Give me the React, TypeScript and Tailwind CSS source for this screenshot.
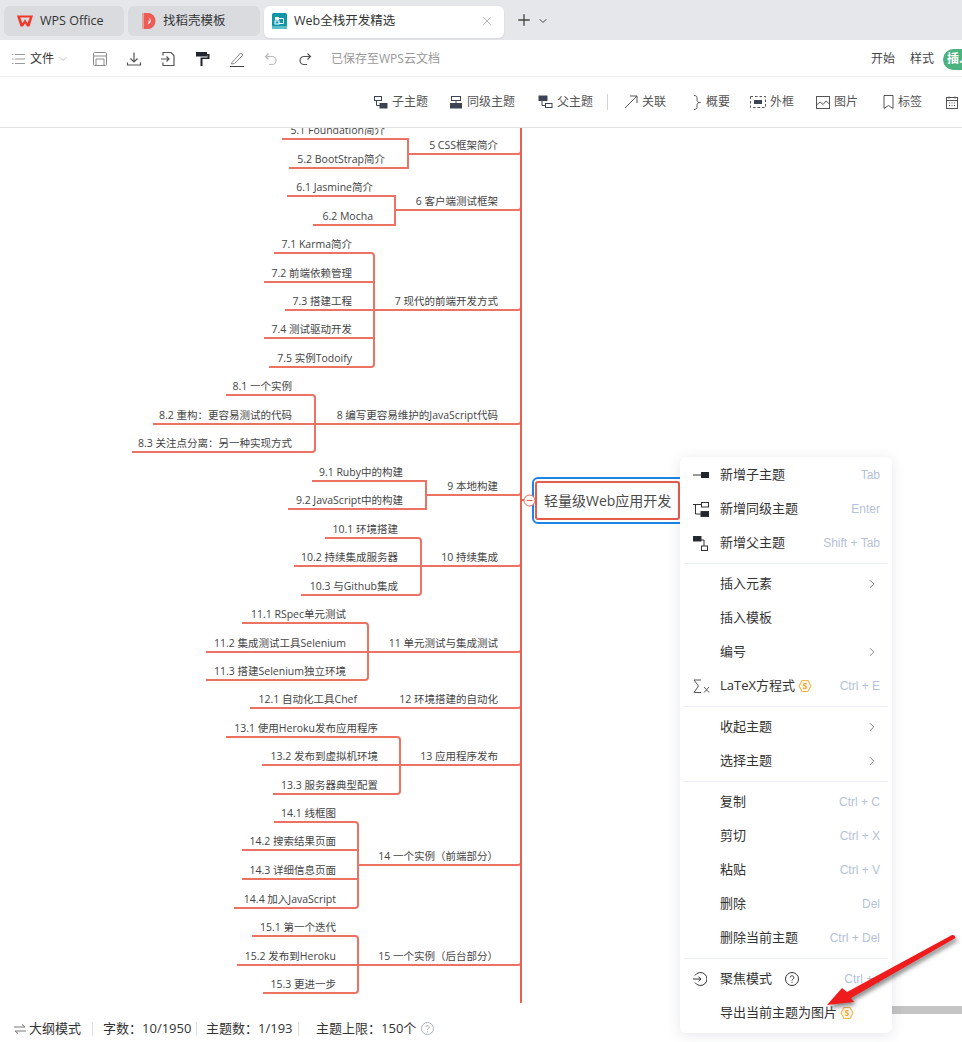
import { ChevronDown, ChevronRight, Plus, X } from "lucide-react";
import type { ReactNode } from "react";

const TOP = 128;
const RED = "#e9604f";

type Branch = {
  label: string;
  y: number;
  bracket: number;
  textRight: number;
  kids: { label: string; y: number; from: number }[];
};

const branches: Branch[] = [
  {
    label: "5 CSS框架简介", y: 154, bracket: 408, textRight: 385,
    kids: [
      { label: "5.1 Foundation简介", y: 139, from: 282 },
      { label: "5.2 BootStrap简介", y: 168, from: 289 },
    ],
  },
  {
    label: "6 客户端测试框架", y: 210, bracket: 395, textRight: 373,
    kids: [
      { label: "6.1 Jasmine简介", y: 196, from: 287 },
      { label: "6.2 Mocha", y: 225, from: 313 },
    ],
  },
  {
    label: "7 现代的前端开发方式", y: 310, bracket: 374, textRight: 352,
    kids: [
      { label: "7.1 Karma简介", y: 253, from: 274 },
      { label: "7.2 前端依赖管理", y: 282, from: 264 },
      { label: "7.3 搭建工程", y: 310, from: 285 },
      { label: "7.4 测试驱动开发", y: 338, from: 264 },
      { label: "7.5 实例Todoify", y: 367, from: 269 },
    ],
  },
  {
    label: "8 编写更容易维护的JavaScript代码", y: 424, bracket: 315, textRight: 292,
    kids: [
      { label: "8.1 一个实例", y: 395, from: 226 },
      { label: "8.2 重构：更容易测试的代码", y: 424, from: 153 },
      { label: "8.3 关注点分离：另一种实现方式", y: 452, from: 132 },
    ],
  },
  {
    label: "9 本地构建", y: 495, bracket: 426, textRight: 403,
    kids: [
      { label: "9.1 Ruby中的构建", y: 481, from: 312 },
      { label: "9.2 JavaScript中的构建", y: 509, from: 288 },
    ],
  },
  {
    label: "10 持续集成", y: 566, bracket: 421, textRight: 398,
    kids: [
      { label: "10.1 环境搭建", y: 538, from: 325 },
      { label: "10.2 持续集成服务器", y: 566, from: 294 },
      { label: "10.3 与Github集成", y: 595, from: 301 },
    ],
  },
  {
    label: "11 单元测试与集成测试", y: 652, bracket: 368, textRight: 346,
    kids: [
      { label: "11.1 RSpec单元测试", y: 623, from: 242 },
      { label: "11.2 集成测试工具Selenium", y: 652, from: 206 },
      { label: "11.3 搭建Selenium独立环境", y: 680, from: 206 },
    ],
  },
  {
    label: "12 环境搭建的自动化", y: 708, bracket: 380, textRight: 357,
    kids: [{ label: "12.1 自动化工具Chef", y: 708, from: 250 }],
  },
  {
    label: "13 应用程序发布", y: 765, bracket: 400, textRight: 378,
    kids: [
      { label: "13.1 使用Heroku发布应用程序", y: 737, from: 226 },
      { label: "13.2 发布到虚拟机环境", y: 765, from: 262 },
      { label: "13.3 服务器典型配置", y: 794, from: 273 },
    ],
  },
  {
    label: "14 一个实例（前端部分）", y: 865, bracket: 358, textRight: 336,
    kids: [
      { label: "14.1 线框图", y: 822, from: 274 },
      { label: "14.2 搜索结果页面", y: 850, from: 242 },
      { label: "14.3 详细信息页面", y: 879, from: 242 },
      { label: "14.4 加入JavaScript", y: 908, from: 234 },
    ],
  },
  {
    label: "15 一个实例（后台部分）", y: 965, bracket: 358, textRight: 336,
    kids: [
      { label: "15.1 第一个迭代", y: 936, from: 252 },
      { label: "15.2 发布到Heroku", y: 965, from: 237 },
      { label: "15.3 更进一步", y: 993, from: 263 },
    ],
  },
];

function branchPath(b: Branch) {
  const r = b.kids.length > 2 ? 3 : 0;
  const first = b.kids[0];
  const last = b.kids[b.kids.length - 1];
  let d = `M${b.bracket} ${b.y - TOP}H518Q521 ${b.y - TOP} 521 ${b.y - TOP - 3}`;
  if (b.kids.length === 1) return d + `M${first.from} ${first.y - TOP}H${b.bracket}`;
  d += `M${first.from} ${first.y - TOP}H${b.bracket - r}Q${b.bracket} ${first.y - TOP} ${b.bracket} ${first.y - TOP + r}`;
  d += `V${last.y - TOP - r}Q${b.bracket} ${last.y - TOP} ${b.bracket - r} ${last.y - TOP}H${last.from}`;
  b.kids.slice(1, -1).forEach((k) => {
    d += `M${k.from} ${k.y - TOP}H${b.bracket}`;
  });
  return d;
}

function MapLabel({ text, right, y }: { text: string; right: number; y: number }) {
  return (
    <div
      className="absolute whitespace-nowrap text-[10.5px] leading-4 text-[#444]"
      style={{ right: 962 - right, top: y - TOP - 17 }}
    >
      {text}
    </div>
  );
}

function Coin() {
  return (
    <svg width="14" height="14" viewBox="0 0 14 14" className="shrink-0">
      <path d="M4 1.500h6L13 7l-3 5.500H4L1 7z" fill="#fff6e5" stroke="#f2b552" strokeWidth="1.100" strokeLinejoin="round" />
      <text x="7" y="10" textAnchor="middle" fontSize="8" fontWeight="700" fill="#eda32c">S</text>
    </svg>
  );
}

function ChildTopicIcon() {
  return (
    <svg width="15" height="14" viewBox="0 0 15 14" fill="none" stroke="#3c4454">
      <rect x="1.500" y="1.500" width="7" height="4" />
      <path d="M3.500 5.500V10.500H7" />
      <rect x="7" y="8.500" width="7" height="4.500" fill="#3c4454" />
    </svg>
  );
}

function SiblingTopicIcon() {
  return (
    <svg width="14" height="14" viewBox="0 0 14 14" fill="none" stroke="#3c4454">
      <rect x="2.500" y="1.500" width="9" height="4" />
      <path d="M7 5.500V8.500" />
      <rect x="1.500" y="8.500" width="11" height="4.500" fill="#3c4454" />
    </svg>
  );
}

function ParentTopicIcon() {
  return (
    <svg width="15" height="14" viewBox="0 0 15 14" fill="none" stroke="#3c4454">
      <rect x="1" y="1" width="8" height="4.500" fill="#3c4454" />
      <path d="M4 5.500V10.500H7.500" />
      <rect x="7.500" y="8.500" width="6.500" height="4" />
    </svg>
  );
}

function ToolItem({ icon, label, className }: { icon: ReactNode; label: string; className?: string }) {
  return (
    <div className={`flex shrink-0 items-center gap-1 ${className ?? ""}`}>
      {icon}
      <span className="text-xs text-[#555]">{label}</span>
    </div>
  );
}

function TabBar() {
  return (
    <div className="flex h-10 shrink-0 items-start gap-1 bg-[#e5e7ea] pl-1 pt-1.5">
      <div className="flex h-[30px] w-[120px] items-center gap-[7px] rounded-md bg-[#d9dbdf] pl-[13px] text-[12.5px] text-[#333]">
        <svg width="16" height="12" viewBox="0 0 16 12">
          <path
            fillRule="evenodd"
            d="M0 .5h16L12.500 11.500H10L8 8.500 6 11.500H3.500zM3.200 2.500L5.500 8.200 8 4.200l2.500 4 2.300-5.700z"
            fill="#f0392a"
          />
        </svg>
        WPS Office
      </div>
      <div className="flex h-[30px] w-[132px] items-center gap-[7px] rounded-md bg-[#d9dbdf] pl-3.5 text-[12.5px] text-[#333]">
        <svg width="14" height="16" viewBox="0 0 14 16">
          <path d="M0 0h6a7.500 8 0 0 1 0 16H0z" fill="#ec5b55" />
          <path d="M0 0h2v16H0z" fill="#e8a09c" />
          <path d="M7.500 4c.5 2 2 3 .8 5.500-.7 1.400-2 1.800-2.800 2 1.700-1.500 1-3 .6-4 .8.300 1.200.800 1.300 1.300.4-1.300.3-3.300.100-4.800z" fill="#fff" />
        </svg>
        找稻壳模板
      </div>
      <div className="flex h-8 w-60 items-center rounded-md bg-white pb-[2px] pl-2 pr-2 text-[12.5px] text-[#333] shadow-[0_1px_2px_rgba(0,0,0,0.08)]">
        <svg width="15" height="16" viewBox="0 0 15 16">
          <rect width="15" height="16" rx="1.500" fill="#0e97a8" />
          <rect y="13" width="15" height="3" fill="#5bbfca" />
          <rect x="3" y="4" width="4" height="3" fill="#fff" />
          <rect x="3" y="8" width="4" height="3" fill="none" stroke="#fff" />
          <path d="M7 5.500h4.500v5H7" fill="none" stroke="#fff" />
        </svg>
        <span className="ml-[7px]">Web全栈开发精选</span>
        <X className="ml-auto mr-0.5 h-3.5 w-3.5 text-[#9a9a9a]" strokeWidth={1.25} />
      </div>
      <Plus className="ml-[7px] mt-[5px] h-[18px] w-[18px] text-[#444]" strokeWidth={1.75} />
      <ChevronDown className="mt-[9px] h-3 w-3 text-[#444]" strokeWidth={2} />
    </div>
  );
}

function MenuBar() {
  const stroke = "#555";
  return (
    <div className="flex h-[37px] shrink-0 items-center border-b border-[#eeeff1] bg-white pl-3 pt-[2px]">
      <svg width="13" height="12" viewBox="0 0 13 12" stroke="#999">
        <path d="M0 1.500h1.500M3 1.500h10M0 6h1.500M3 6h10M0 10.500h1.500M3 10.500h10" />
      </svg>
      <span className="ml-[5px] text-[12px] text-[#333]">文件</span>
      <ChevronDown className="ml-[3px] h-3 w-3 text-[#999]" strokeWidth={1.25} />
      <svg width="16" height="16" viewBox="0 0 16 16" fill="none" stroke="#8a8a8a" className="ml-[23px]">
        <path d="M1.500 2.500a1 1 0 0 1 1-1h11a1 1 0 0 1 1 1v11a1 1 0 0 1-1 1h-11a1 1 0 0 1-1-1zM1.500 5h13M4 14.500V8h8v6.500" />
      </svg>
      <svg width="16" height="16" viewBox="0 0 16 16" fill="none" stroke={stroke} strokeWidth="1.200" className="ml-[18px]">
        <path d="M8 1.500v9M4.500 7.500L8 11l3.500-3.500M1.500 11.500v2.500h13v-2.500" />
      </svg>
      <svg width="16" height="16" viewBox="0 0 16 16" fill="none" stroke={stroke} strokeWidth="1.200" className="ml-[18px]">
        <path d="M3 4.500v-3h8l3 3v10H3v-3M1 8h8M6.500 5.500L9 8l-2.500 2.500" />
      </svg>
      <svg width="14" height="16" viewBox="0 0 14 16" className="ml-[20px]">
        <path d="M0 1h11v4.500H0z" fill="#20252e" />
        <path d="M11 3h2.500v5H6.500v7H4.500V6.500h7z" fill="#20252e" />
      </svg>
      <svg width="16" height="16" viewBox="0 0 16 16" fill="none" stroke="#8a8a8a" className="ml-[19px]">
        <path d="M3 11.500L11.500 2l2.500 2L5.500 12.500l-3 .5z" />
        <path d="M1 15.500h14" stroke="#444" />
      </svg>
      <svg width="14" height="14" viewBox="0 0 14 14" fill="none" stroke="#bbb" strokeWidth="1.200" className="ml-[19px]">
        <path d="M4.500 1.500L1.500 4.500l3 3M1.500 4.500h6.500a4 4 0 0 1 0 8H5" />
      </svg>
      <svg width="14" height="14" viewBox="0 0 14 14" fill="none" stroke={stroke} strokeWidth="1.200" className="ml-[20px]">
        <path d="M9.500 1.500l3 3-3 3M12.500 4.500H6a4 4 0 0 0 0 8h3" />
      </svg>
      <span className="ml-[19px] text-[12px] text-[#999]">已保存至WPS云文档</span>
      <span className="ml-auto text-[12px] text-[#444]">开始</span>
      <span className="ml-[15px] text-[12px] text-[#444]">样式</span>
      <div className="ml-[9px] flex h-[21px] w-[19px] shrink-0 items-center overflow-hidden whitespace-nowrap rounded-l-full bg-[#4cb27f] pl-[4px] text-[12px] font-bold text-white">
        插入
      </div>
    </div>
  );
}

function TopicBar() {
  return (
    <div className="flex h-[51px] shrink-0 items-center overflow-hidden border-b border-[#e4e4e4] bg-white pl-[373px] shadow-[0_1px_2px_rgba(0,0,0,0.04)]">
      <ToolItem icon={<ChildTopicIcon />} label="子主题" />
      <ToolItem className="ml-[21px]" icon={<SiblingTopicIcon />} label="同级主题" />
      <ToolItem className="ml-[23px]" icon={<ParentTopicIcon />} label="父主题" />
      <div className="ml-[14px] h-4 w-px shrink-0 bg-[#d4d4d4]" />
      <ToolItem
        className="ml-[16px]"
        icon={
          <svg width="14" height="14" viewBox="0 0 14 14" fill="none" stroke="#555">
            <path d="M1 13L13 1M6 1h7v7" />
          </svg>
        }
        label="关联"
      />
      <ToolItem
        className="ml-[27px]"
        icon={
          <svg width="9" height="15" viewBox="0 0 9 15" fill="none" stroke="#555">
            <path d="M1 .5c3 0 3 1.500 3 3.500s0 3.500 3.500 3.500C4 7.500 4 9 4 11s0 3.500-3 3.500" />
          </svg>
        }
        label="概要"
      />
      <ToolItem
        className="ml-[20px]"
        icon={
          <svg width="16" height="12" viewBox="0 0 16 12">
            <rect x=".5" y=".5" width="15" height="11" fill="none" stroke="#555" strokeDasharray="2.500 2" />
            <rect x="4" y="4" width="8" height="4" fill="#3c4454" />
          </svg>
        }
        label="外框"
      />
      <ToolItem
        className="ml-[22px]"
        icon={
          <svg width="14" height="13" viewBox="0 0 14 13" fill="none" stroke="#555">
            <rect x=".5" y=".5" width="13" height="12" />
            <path d="M.5 9l3.500-3 3 2.500 3-3.500 3.500 3" />
          </svg>
        }
        label="图片"
      />
      <ToolItem
        className="ml-[25px]"
        icon={
          <svg width="11" height="14" viewBox="0 0 11 14" fill="none" stroke="#555">
            <path d="M1 .5h9v13l-4.500-3-4.500 3z" />
          </svg>
        }
        label="标签"
      />
      <svg width="12" height="13" viewBox="0 0 12 13" fill="none" stroke="#555" className="ml-[24px] shrink-0">
        <rect x=".5" y="1.500" width="11" height="11" />
        <path d="M.5 4.500h11M3 .5v2M9 .5v2M3 7h1M5.500 7h1M8 7h1M3 9.500h1M5.500 9.500h1M8 9.500h1" />
      </svg>
    </div>
  );
}

function MindMap() {
  return (
    <div className="relative min-h-0 flex-1 overflow-hidden bg-white">
      <svg className="absolute left-0 top-0" width="962" height="890" fill="none">
        <path d="M521 0V875" stroke={RED} strokeWidth="2" />
        {branches.map((b) => (
          <path key={b.label} d={branchPath(b)} stroke={RED} strokeWidth="2" opacity="0.88" />
        ))}
      </svg>
      {branches.map((b) => (
        <div key={b.label}>
          <MapLabel text={b.label} right={498} y={b.y} />
          {b.kids.map((k) => (
            <MapLabel key={k.label} text={k.label} right={b.textRight} y={k.y} />
          ))}
        </div>
      ))}
      <div className="absolute left-[532px] top-[349px] flex h-[47px] w-[160px] items-center rounded-md border-2 border-[#1c83e8] bg-white pl-[1px]">
        <div className="flex h-[39px] w-[145px] items-center rounded-[3px] border-[2.5px] border-[#e45c4c] pl-[7px] text-sm text-[#4a4a4a]">
          轻量级Web应用开发
        </div>
      </div>
      <svg className="absolute left-[521px] top-[364px]" width="16" height="16" fill="none">
        <path d="M0 8H3" stroke={RED} strokeWidth="2" />
        <circle cx="8.500" cy="8.500" r="5.500" fill="#fff" stroke={RED} />
        <path d="M5.500 8.500H11.500" stroke={RED} />
      </svg>
      <div className="absolute bottom-[1px] right-0 h-2 w-[70px] bg-[#c4c4c4]" />
    </div>
  );
}

function StatusBar() {
  return (
    <div className="flex h-[27px] shrink-0 items-center bg-white pl-[14px] text-[13px] text-[#333]">
      <svg width="12" height="10" viewBox="0 0 12 10" fill="none" stroke="#777">
        <path d="M0 3h11L8 .5M12 7H1l3 2.500" />
      </svg>
      <span className="ml-[3px]">大纲模式</span>
      <div className="ml-[11px] h-3.5 w-px bg-[#ddd]" />
      <span className="ml-[10px] w-[93px]">字数：10/1950</span>
      <div className="h-3.5 w-px bg-[#ddd]" />
      <span className="ml-[9px] w-[92px]">主题数：1/193</span>
      <div className="h-3.5 w-px bg-[#ddd]" />
      <span className="ml-[17px]">主题上限：150个</span>
      <svg width="13" height="13" viewBox="0 0 13 13" className="ml-[5px]" fill="none" stroke="#aab2bf">
        <circle cx="6.500" cy="6.500" r="6" />
        <path d="M4.800 5.200a1.700 1.700 0 1 1 2.500 1.500c-.6.300-.8.600-.8 1.300M6.500 9.300v1" />
      </svg>
    </div>
  );
}

type MenuRow = {
  label: string;
  hint?: string;
  arrow?: boolean;
  coin?: boolean;
  icon?: ReactNode;
  help?: boolean;
};

const menuGroups: MenuRow[][] = [
  [
    {
      label: "新增子主题",
      hint: "Tab",
      icon: (
        <svg width="16" height="8" viewBox="0 0 16 8">
          <path d="M0 4h9" stroke="#333" />
          <rect x="8" y="1" width="8" height="6" fill="#20252e" />
        </svg>
      ),
    },
    {
      label: "新增同级主题",
      hint: "Enter",
      icon: (
        <svg width="16" height="15" viewBox="0 0 16 15" fill="none" stroke="#333">
          <path d="M0 2.500h8M2.500 2.500V12H8" />
          <rect x="8.500" y=".5" width="7" height="4.500" />
          <rect x="8" y="9.500" width="8" height="5" fill="#20252e" />
        </svg>
      ),
    },
    {
      label: "新增父主题",
      hint: "Shift + Tab",
      icon: (
        <svg width="15" height="15" viewBox="0 0 15 15" fill="none" stroke="#333">
          <rect x="0" y="0" width="8" height="5" fill="#20252e" />
          <path d="M7 4h4v6" />
          <rect x="8.500" y="10" width="6" height="4.500" />
        </svg>
      ),
    },
  ],
  [
    { label: "插入元素", arrow: true },
    { label: "插入模板" },
    { label: "编号", arrow: true },
    {
      label: "LaTeX方程式",
      hint: "Ctrl + E",
      coin: true,
      icon: (
        <svg width="17" height="15" viewBox="0 0 17 15" fill="none" stroke="#555">
          <path d="M8 1H1l4.500 6L1 13.500h7" />
          <path d="M11 8l5 5.500M16 8l-5 5.500" />
        </svg>
      ),
    },
  ],
  [
    { label: "收起主题", arrow: true },
    { label: "选择主题", arrow: true },
  ],
  [
    { label: "复制", hint: "Ctrl + C" },
    { label: "剪切", hint: "Ctrl + X" },
    { label: "粘贴", hint: "Ctrl + V" },
    { label: "删除", hint: "Del" },
    { label: "删除当前主题", hint: "Ctrl + Del" },
  ],
  [
    {
      label: "聚焦模式",
      hint: "Ctrl + .",
      help: true,
      icon: (
        <svg width="14" height="14" viewBox="0 0 14 14" fill="none" stroke="#333">
          <path d="M2 3.500A6.500 6.500 0 1 1 2 10.500M0 7h8M5.500 4.700L8 7 5.500 9.300" />
        </svg>
      ),
    },
    { label: "导出当前主题为图片", coin: true },
  ],
];

function ContextMenu() {
  return (
    <div className="absolute left-[680px] top-[457px] w-[212px] rounded-md bg-white pb-[3px] pt-px shadow-[0_2px_14px_rgba(40,50,80,0.12)]">
      {menuGroups.map((group, i) => (
        <div key={i}>
          {i > 0 && <div className="mx-1 my-[3px] h-px bg-[#eceef5]" />}
          {group.map((row) => (
            <div key={row.label} className="relative flex h-[34px] items-center pl-10 pr-3 text-[13px] text-[#333]">
              {row.icon && (
                <div className="absolute left-[13px] top-0 flex h-full w-[17px] items-center">{row.icon}</div>
              )}
              <span>{row.label}</span>
              {row.coin && (
                <span className="ml-[3px]">
                  <Coin />
                </span>
              )}
              {row.help && (
                <svg width="14" height="14" viewBox="0 0 14 14" fill="none" stroke="#333" className="ml-[13px]">
                  <circle cx="7" cy="7" r="6.500" />
                  <path d="M5.200 5.500a1.800 1.800 0 1 1 2.700 1.600c-.6.300-.9.700-.9 1.400M7 9.800v1" />
                </svg>
              )}
              {row.hint && (
                <span className="ml-auto font-['Liberation_Sans',sans-serif] text-xs text-[#b4c2d8]">{row.hint}</span>
              )}
              {row.arrow && <ChevronRight className="ml-auto mr-px h-3.5 w-3.5 text-[#555]" strokeWidth={1.25} />}
            </div>
          ))}
        </div>
      ))}
    </div>
  );
}

export default function App() {
  return (
    <div className="relative flex h-[1042px] w-[962px] flex-col overflow-hidden bg-white font-['Open_Sans','Noto_Sans_CJK_SC',sans-serif]">
      <TabBar />
      <MenuBar />
      <TopicBar />
      <MindMap />
      <StatusBar />
      <ContextMenu />
      <svg
        className="absolute left-[820px] top-[930px] drop-shadow-[2px_3px_2px_rgba(0,0,0,0.45)]"
        width="142"
        height="84"
        viewBox="820 930 142 84"
      >
        <path d="M827 1005L842 988L847 992L952 935Q955 934.500 955.500 938L851 998L854 1002Z" fill="#ee1c1c" />
      </svg>
    </div>
  );
}
